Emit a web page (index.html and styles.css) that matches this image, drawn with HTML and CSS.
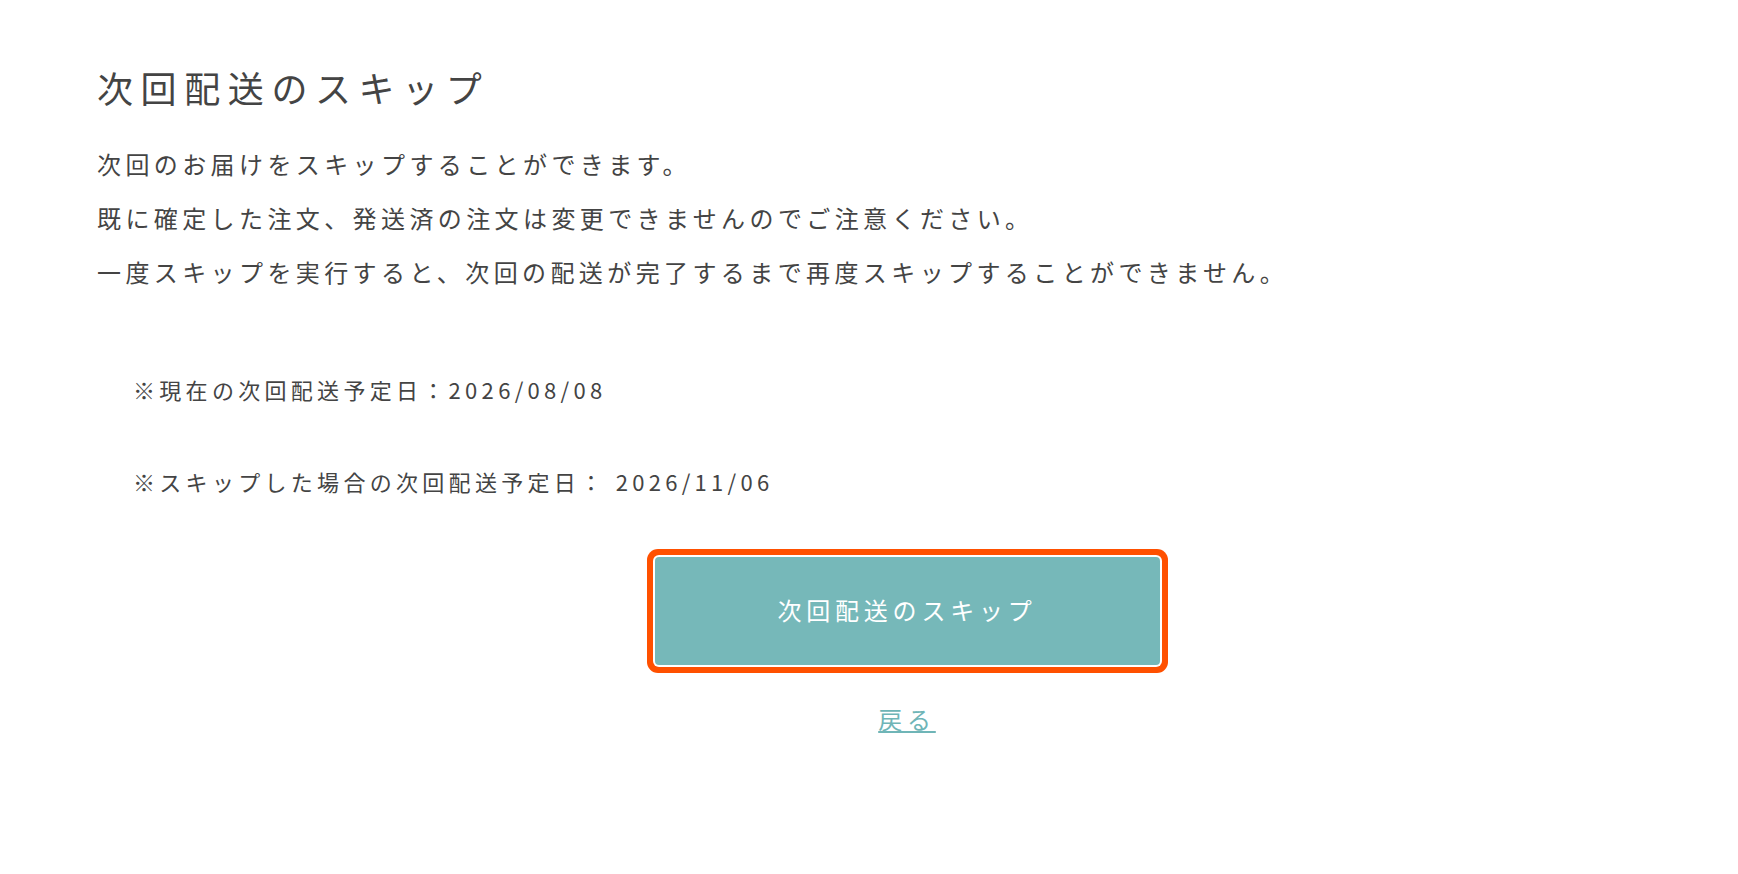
FILE: index.html
```html
<!DOCTYPE html>
<html lang="ja">
<head>
    <meta charset="UTF-8">
    <meta name="viewport" content="width=device-width, initial-scale=1.0">
    <title>次回配送のスキップ</title>
    <link rel="stylesheet" href="styles.css">
</head>
<body>

    <main class="skip-page">
        <h1>次回配送のスキップ</h1>

        <div class="intro">
            <p>次回のお届けをスキップすることができます。</p>
            <p>既に確定した注文、発送済の注文は変更できませんのでご注意ください。</p>
            <p>一度スキップを実行すると、次回の配送が完了するまで再度スキップすることができません。</p>
        </div>

        <div class="dates">
            <p>※現在の次回配送予定日：2026/08/08</p>
            <p>※スキップした場合の次回配送予定日： 2026/11/06</p>
        </div>

        <div class="actions">
            <button class="btn-skip" type="button">次回配送のスキップ</button>
            <a class="back-link" href="#">戻る</a>
        </div>
    </main>

</body>
</html>
```

FILE: styles.css
```css
body {
    margin: 0;
    font-family: "Noto Sans CJK JP", "Noto Sans", sans-serif;
    background-color: #fff;
    color: #444;
}
.skip-page {
    padding: 63px 21px 80px 97px;
}
h1 {
    margin: 0;
    font-size: 36px;
    font-weight: 400;
    line-height: 48px;
    letter-spacing: 7.6px;
}
.intro {
    margin-top: 26px;
}
.intro p {
    margin: 0;
    font-size: 24px;
    line-height: 54px;
    letter-spacing: 4.4px;
}
.dates {
    padding-left: 36px;
    margin-top: 70px;
}
.dates p {
    margin: 0 0 52px;
    font-size: 22px;
    line-height: 40px;
    letter-spacing: 4.3px;
}
.dates p:last-child {
    margin-bottom: 0;
}
.actions {
    display: flex;
    flex-direction: column;
    align-items: center;
    margin-top: 56px;
}
.btn-skip {
    width: 505px;
    height: 108px;
    padding: 0 0 4px;
    border: none;
    border-radius: 4px;
    background-color: #76b8b9;
    color: #fff;
    font-family: inherit;
    font-size: 24px;
    letter-spacing: 0.2em;
    cursor: pointer;
    box-shadow: 0 0 0 2px #fff, 0 0 0 8px #ff5000;
}
.back-link {
    margin-top: 36px;
    font-size: 24px;
    line-height: 36px;
    letter-spacing: 0.2em;
    color: #6fb5b7;
    text-decoration: underline;
}
```
